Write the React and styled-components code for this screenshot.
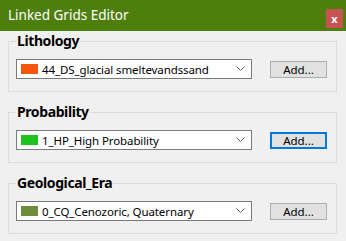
import React from "react";
import styled, { createGlobalStyle } from "styled-components";

const Global = createGlobalStyle`
  html, body { margin: 0; padding: 0; background: #f0f0f0; }
  body { font-family: "Noto Sans", "Open Sans", sans-serif; }
`;

const Window = styled.div`
  width: 346px;
  height: 241px;
  background: #f0f0f0;
  display: flex;
  flex-direction: column;
  overflow: hidden;
`;

const TitleBar = styled.div`
  height: 31px;
  background: #4e7e0c;
  display: flex;
  align-items: center;
  justify-content: space-between;
  padding: 0 3px 0 8px;
  box-sizing: border-box;
  flex-shrink: 0;
`;

const Title = styled.span`
  color: #ffffff;
  font-size: 13.5px;
  font-family: "Noto Sans", sans-serif;
  margin-top: -2px;
`;

const CloseButton = styled.div`
  width: 17px;
  height: 19px;
  margin-top: 6px;
  background: #c75252;
  color: #ffffff;
  font-size: 11px;
  font-weight: bold;
  display: flex;
  align-items: center;
  justify-content: center;
  font-family: "Noto Sans", sans-serif;
  line-height: 1;
`;

const Body = styled.div`
  display: flex;
  flex-direction: column;
  gap: 10px;
  padding: 0 9px 0 8px;
`;

const Group = styled.fieldset`
  margin: 0;
  padding: 0 9px 12px 7px;
  border: 1px solid #dcdcdc;
  min-width: 0;
`;

const Legend = styled.legend`
  padding: 0 1px;
  margin-left: 0;
  font-family: "Noto Sans", sans-serif;
  font-weight: bold;
  font-size: 14px;
  letter-spacing: -0.4px;
  line-height: 20px;
  color: #000;
`;

const Row = styled.div`
  display: flex;
  align-items: center;
  margin-top: 8px;
`;

const Combo = styled.div`
  width: 236px;
  height: 20px;
  box-sizing: border-box;
  background: #ffffff;
  border: 1px solid #7a7a7a;
  display: flex;
  align-items: center;
  padding: 0 6px 0 4px;
`;

const Swatch = styled.span`
  width: 17px;
  height: 10px;
  background: ${(p) => p.$color};
  flex-shrink: 0;
`;

const ComboText = styled.span`
  flex: 1;
  margin-left: 4px;
  font-size: 11.5px;
  color: #000;
  white-space: nowrap;
  overflow: hidden;
  font-family: "Noto Sans", sans-serif;
  letter-spacing: -0.1px;
`;

const Chevron = styled.svg`
  width: 9px;
  height: 6px;
  flex-shrink: 0;
`;

const Button = styled.div`
  margin-left: 18px;
  margin-top: 1px;
  width: 57px;
  height: 17px;
  box-sizing: border-box;
  background: #e1e1e1;
  border: ${(p) => (p.$focused ? "2px solid #0078d7" : "1px solid #adadad")};
  display: flex;
  align-items: center;
  justify-content: center;
  font-size: 11.5px;
  color: #000;
  font-family: "Noto Sans", sans-serif;
`;

const groups = [
  { title: "Lithology", color: "#f4570c", text: "44_DS_glacial smeltevandssand" },
  { title: "Probability", color: "#1ec41e", text: "1_HP_High Probability", focused: true },
  { title: "Geological_Era", color: "#6e8c3c", text: "0_CQ_Cenozoric, Quaternary" },
];

export default function App() {
  return (
    <Window>
      <Global />
      <TitleBar>
        <Title>Linked Grids Editor</Title>
        <CloseButton>x</CloseButton>
      </TitleBar>
      <Body>
        {groups.map((g) => (
          <Group key={g.title}>
            <Legend>{g.title}</Legend>
            <Row>
              <Combo>
                <Swatch $color={g.color} />
                <ComboText>{g.text}</ComboText>
                <Chevron viewBox="0 0 9 6">
                  <path d="M0.5 0.5 L4.5 4.5 L8.5 0.5" fill="none" stroke="#606060" strokeWidth="1" />
                </Chevron>
              </Combo>
              <Button $focused={g.focused}>Add...</Button>
            </Row>
          </Group>
        ))}
      </Body>
    </Window>
  );
}
